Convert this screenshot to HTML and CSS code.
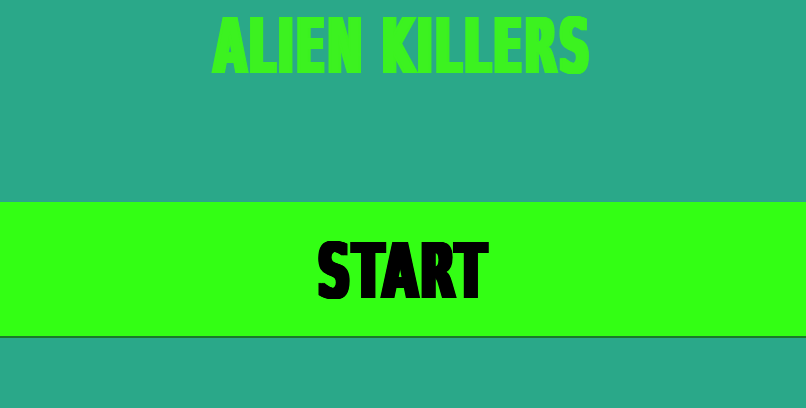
FILE: index.html
```html
<!DOCTYPE html>
<html>
<head>
<meta charset="utf-8">
<link rel="stylesheet" href="styles.css">
</head>
<body>
<main class="screen">
  <h1 class="title"><span class="title-text">ALIEN KILLERS</span></h1>
  <button class="start"><span class="start-text">START</span></button>
</main>
</body>
</html>
```
FILE: styles.css
```css
html, body {
  margin: 0;
  padding: 0;
  background: #2aa889;
  height: 100%;
}
.screen {
  display: flex;
  flex-direction: column;
  align-items: stretch;
}
.title {
  margin: 0;
  height: 202px;
  box-sizing: border-box;
  padding-top: 7px;
  text-align: center;
  font-family: "DejaVu Sans", sans-serif;
  font-weight: 700;
  font-size: 77px;
  line-height: 80px;
  color: #3cf220;
}
.title-text {
  display: inline-block;
  letter-spacing: 5px;
  transform: scaleX(0.54);
  text-shadow: -5px 0 0 #3cf220, -4px 0 0 #3cf220, -3px 0 0 #3cf220, -2px 0 0 #3cf220, -1px 0 0 #3cf220,
               1px 0 0 #3cf220, 2px 0 0 #3cf220, 3px 0 0 #3cf220, 4px 0 0 #3cf220, 5px 0 0 #3cf220;
}
.start {
  height: 136px;
  border: none;
  border-bottom: 2px solid #1b7a2a;
  background: #33ff14;
  color: #000;
  font-family: "DejaVu Sans", sans-serif;
  font-weight: 700;
  font-size: 77px;
  line-height: 80px;
  padding: 6px 0 0;
  cursor: pointer;
}
.start-text {
  display: inline-block;
  letter-spacing: 5px;
  transform: scaleX(0.58);
  text-shadow: -5px 0 0 #000, -4px 0 0 #000, -3px 0 0 #000, -2px 0 0 #000, -1px 0 0 #000,
               1px 0 0 #000, 2px 0 0 #000, 3px 0 0 #000, 4px 0 0 #000, 5px 0 0 #000;
}
```
